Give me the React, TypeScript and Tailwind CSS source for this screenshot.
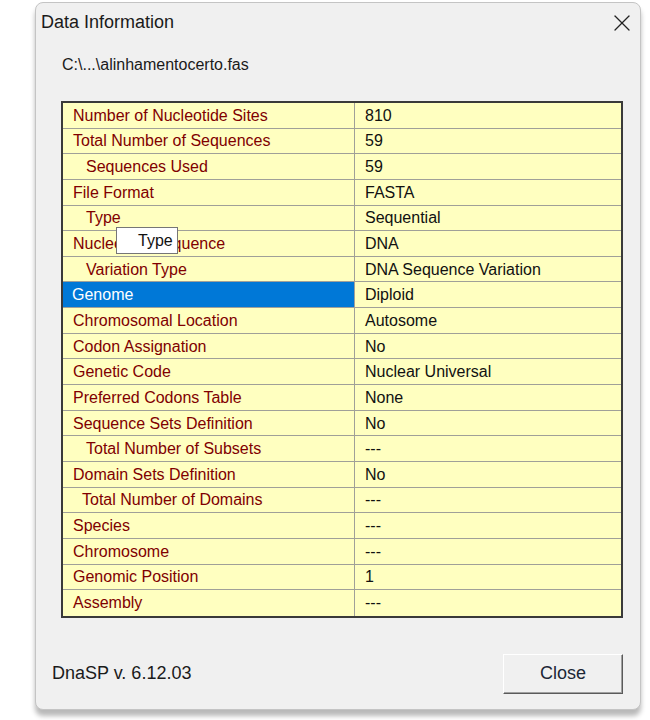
import { X } from 'lucide-react';

type Row = { label: string; value: string; indent?: number; selected?: boolean };

const rows: Row[] = [
    { label: 'Number of Nucleotide Sites', value: '810' },
    { label: 'Total Number of Sequences', value: '59' },
    { label: 'Sequences Used', value: '59', indent: 1 },
    { label: 'File Format', value: 'FASTA' },
    { label: 'Type', value: 'Sequential', indent: 1 },
    { label: 'Nucleotide Sequence', value: 'DNA' },
    { label: 'Variation Type', value: 'DNA Sequence Variation', indent: 1 },
    { label: 'Genome', value: 'Diploid', selected: true },
    { label: 'Chromosomal Location', value: 'Autosome' },
    { label: 'Codon Assignation', value: 'No' },
    { label: 'Genetic Code', value: 'Nuclear Universal' },
    { label: 'Preferred Codons Table', value: 'None' },
    { label: 'Sequence Sets Definition', value: 'No' },
    { label: 'Total Number of Subsets', value: '---', indent: 1 },
    { label: 'Domain Sets Definition', value: 'No' },
    { label: 'Total Number of Domains', value: '---', indent: 2 },
    { label: 'Species', value: '---' },
    { label: 'Chromosome', value: '---' },
    { label: 'Genomic Position', value: '1' },
    { label: 'Assembly', value: '---' },
];

export default function App() {
    return (
        <div className="h-[720px] w-[650px] overflow-hidden bg-white pl-[35px] pt-[2px]" style={{ fontFamily: "'Liberation Sans', Arial, sans-serif" }}>
            <div className="flex h-[708px] w-[606px] flex-col rounded-lg border border-[#c4c4c4] bg-[#f0f0f0] shadow-[0_6px_5px_rgba(0,0,0,0.28)]">
                {/* Title bar */}
                <div className="flex h-[38px] items-center justify-between pl-[5px] pr-[4px] pt-[1px]">
                    <span className="text-[18px] text-[#1a1a1a]">Data Information</span>
                    <X className="h-[28px] w-[28px] text-[#222]" strokeWidth={1.1} />
                </div>

                <p className="ml-[26px] mt-[14px] text-[16px] leading-[20px] text-[#1a1a1a]">C:\...\alinhamentocerto.fas</p>

                {/* Grid */}
                <div className="relative ml-[25px] mt-[26px] w-[562px] border-2 border-[#3a3a3a] bg-[#ffffc0]">
                    {rows.map((r, i) => (
                        <div key={i} className={`flex h-[25.65px] text-[16px] ${i < rows.length - 1 ? 'border-b border-[#a0a098]' : ''}`}>
                            <div
                                className={`flex w-[292px] items-center border-r border-[#a0a098] pt-[1px] ${r.selected ? 'bg-[#0078d7] pl-[9px] text-white' : 'text-[#800000]'} ${!r.selected && !r.indent ? 'pl-[10px]' : ''} ${r.indent === 1 ? 'pl-[23px]' : ''} ${r.indent === 2 ? 'pl-[19px]' : ''}`}
                            >
                                {r.label}
                            </div>
                            <div className="flex flex-1 items-center pl-[10px] pt-[1px] text-[#111]">{r.value}</div>
                        </div>
                    ))}

                    {/* Tooltip */}
                    <div className="absolute left-[53px] top-[124px] flex h-[27px] w-[62px] items-center border border-[#767676] bg-white pl-[21px] text-[16px] text-[#111]">
                        Type
                    </div>
                </div>

                {/* Footer */}
                <div className="mt-[36px] flex items-center justify-between pl-[16px] pr-[17px]">
                    <span className="text-[18px] text-[#1a1a1a]">DnaSP v. 6.12.03</span>
                    <button className="flex h-[40px] w-[120px] items-center justify-center border border-b-[#5a5a5a] border-l-white border-r-[#5a5a5a] border-t-white bg-[#f0f0f0] text-[18px] text-[#1c2736] shadow-[inset_-1px_-1px_0_#a0a0a0]">
                        Close
                    </button>
                </div>
            </div>
        </div>
    );
}
